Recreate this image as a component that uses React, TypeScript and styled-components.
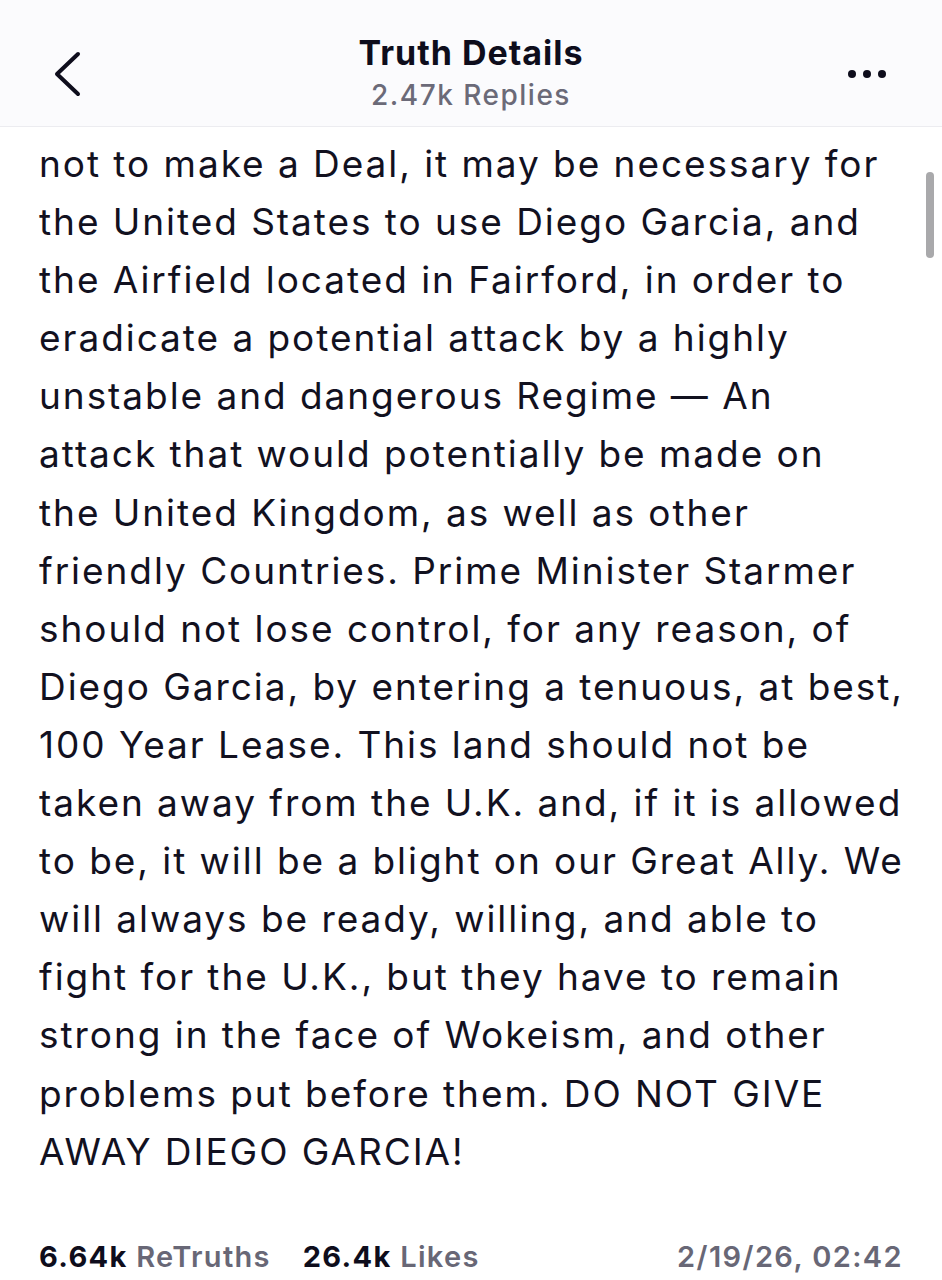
import React from "react";
import styled, { createGlobalStyle } from "styled-components";

const Global = createGlobalStyle`
  html, body { margin: 0; padding: 0; background: #ffffff; }
  body { font-family: Inter, "Noto Sans", sans-serif; -webkit-font-smoothing: antialiased; }
`;

const Page = styled.div`
  width: 942px;
  height: 1280px;
  position: relative;
  overflow: hidden;
  background: #ffffff;
  display: flex;
  flex-direction: column;
`;

const Header = styled.header`
  height: 127px;
  flex: 0 0 auto;
  box-sizing: border-box;
  background: #fbfbfd;
  border-bottom: 1.5px solid #ececf0;
  display: grid;
  grid-template-columns: 120px 1fr 120px;
  align-items: center;
  padding-top: 22px;
`;

const BackButton = styled.div`
  display: flex;
  align-items: center;
  padding-left: 53px;
`;

const TitleBlock = styled.div`
  display: flex;
  flex-direction: column;
  align-items: center;
  gap: 6px;
  margin-top: 2px;
`;

const Title = styled.div`
  font-size: 34px;
  font-weight: 700;
  color: #0e0d1c;
  letter-spacing: 1px;
  line-height: 38px;
  margin-top: -4px;
`;

const Subtitle = styled.div`
  font-size: 28px;
  font-weight: 500;
  color: #6b6a78;
  line-height: 34px;
  letter-spacing: 1.5px;
`;

const MoreButton = styled.div`
  display: flex;
  justify-content: flex-end;
  padding-right: 56px;
  gap: 7px;
`;

const Dot = styled.span`
  width: 8px;
  height: 8px;
  border-radius: 50%;
  background: #0e0d1c;
`;

const Body = styled.div`
  flex: 1;
  padding: 0 30px 0 39px;
  margin-top: 8px;
`;

const Line = styled.div`
  font-size: 37px;
  line-height: 58.1px;
  color: #12111f;
  white-space: nowrap;
  letter-spacing: 1.95px;
`;

const Footer = styled.div`
  display: flex;
  align-items: center;
  padding: 0 40px 0 39px;
  height: 40px;
  margin-bottom: 4px;
`;

const Stat = styled.span`
  font-size: 29px;
  font-weight: 600;
  color: #686776;
  margin-right: 32px;
  letter-spacing: 1.3px;
  b { color: #0e0d1c; font-weight: 700; }
`;

const DateText = styled.span`
  margin-left: auto;
  font-size: 29px;
  font-weight: 600;
  color: #686776;
  letter-spacing: 1.4px;
  margin-right: -1px;
`;

const Scrollbar = styled.div`
  position: absolute;
  left: 926px;
  top: 172px;
  width: 8px;
  height: 86px;
  border-radius: 4px;
  background: #a9a9ab;
`;

const lines = [
  "not to make a Deal, it may be necessary for",
  "the United States to use Diego Garcia, and",
  "the Airfield located in Fairford, in order to",
  "eradicate a potential attack by a highly",
  "unstable and dangerous Regime \u2014 An",
  "attack that would potentially be made on",
  "the United Kingdom, as well as other",
  "friendly Countries. Prime Minister Starmer",
  "should not lose control, for any reason, of",
  "Diego Garcia, by entering a tenuous, at best,",
  "100 Year Lease. This land should not be",
  "taken away from the U.K. and, if it is allowed",
  "to be, it will be a blight on our Great Ally. We",
  "will always be ready, willing, and able to",
  "fight for the U.K., but they have to remain",
  "strong in the face of Wokeism, and other",
  "problems put before them. DO NOT GIVE",
  "AWAY DIEGO GARCIA!",
];

export default function App() {
  return (
    <Page>
      <Global />
      <Header>
        <BackButton>
          <svg width="28" height="46" viewBox="0 0 28 46" fill="none">
            <path d="M25 3 L4 23 L25 43" stroke="#0e0d1c" strokeWidth="4" strokeLinecap="round" strokeLinejoin="round" />
          </svg>
        </BackButton>
        <TitleBlock>
          <Title>Truth Details</Title>
          <Subtitle>2.47k Replies</Subtitle>
        </TitleBlock>
        <MoreButton>
          <Dot />
          <Dot />
          <Dot />
        </MoreButton>
      </Header>
      <Body>
        {lines.map((l, i) => (
          <Line key={i}>{l}</Line>
        ))}
      </Body>
      <Footer>
        <Stat><b>6.64k</b> ReTruths</Stat>
        <Stat><b>26.4k</b> Likes</Stat>
        <DateText>2/19/26, 02:42</DateText>
      </Footer>
      <Scrollbar />
    </Page>
  );
}
